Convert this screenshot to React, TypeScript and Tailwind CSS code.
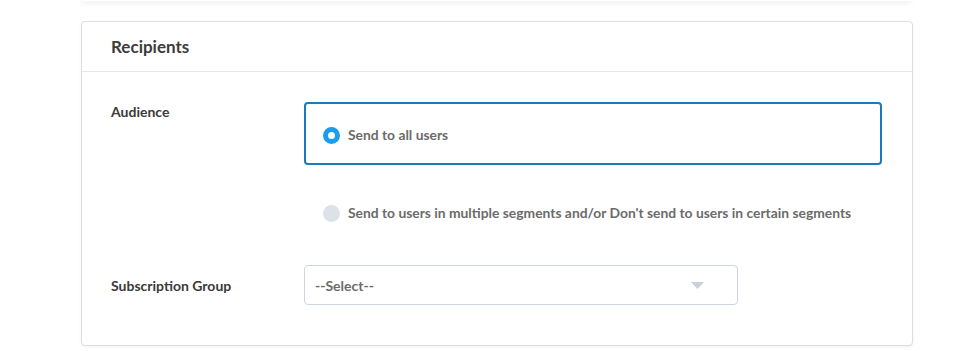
import React from "react";

const font = { fontFamily: "Lato, 'Open Sans', Arial, sans-serif" };

function Radio({ checked }: { checked: boolean }) {
  return checked ? (
    <span className="h-[17px] w-[17px] shrink-0 rounded-full border-[5px] border-[#1a9cf0] bg-white" />
  ) : (
    <span className="h-[17px] w-[17px] shrink-0 rounded-full bg-[#dde1e8]" />
  );
}

export default function App() {
  return (
    <div className="min-h-[351px] w-[975px] bg-white" style={font}>
      {/* previous card edge */}
      <div className="ml-[82px] h-[1px] w-[829px] bg-white shadow-[0_1px_5px_rgba(0,0,0,0.25)]" />

      <div className="ml-[81px] mt-[20px] w-[832px] rounded-[4px] border border-[#dedede] bg-white shadow-[0_1px_3px_rgba(0,0,0,0.06)]">
        <div className="flex h-[50px] items-center border-b border-[#e6e6e6] pl-[29px]">
          <h2 className="text-[17px] font-bold text-[#3c3c3c]">Recipients</h2>
        </div>

        <div className="pl-[29px] pt-[30px] pb-[40px]">
          {/* Audience */}
          <div className="flex">
            <div className="w-[193px] -mt-[1px] text-[14px] font-bold text-[#3a3a3a]">Audience</div>
            <div className="flex w-[578px] flex-col">
              <label className="flex h-[63px] items-center gap-[8px] rounded-[4px] border-2 border-[#1b7bb9] pl-[17px] pt-[3px]">
                <Radio checked />
                <span className="text-[13.85px] font-bold text-[#6b6b6b]">Send to all users</span>
              </label>
              <label className="mt-[31px] flex h-[34px] items-center gap-[8px] pl-[19px]">
                <Radio checked={false} />
                <span className="text-[13.85px] font-bold text-[#6b6b6b]">
                  Send to users in multiple segments and/or Don't send to users in certain segments
                </span>
              </label>
            </div>
          </div>

          {/* Subscription group */}
          <div className="mt-[35px] flex items-center">
            <div className="w-[193px] text-[14px] font-bold text-[#3a3a3a]">Subscription Group</div>
            <div className="relative flex h-[40px] w-[434px] items-center rounded-[4px] border border-[#cdd6e0] pl-[10px] pt-[1px]">
              <span className="text-[14px] font-bold text-[#6b6b6b]">--Select--</span>
              <svg className="absolute left-[386px] top-[16px]" width="13" height="7" viewBox="0 0 13 7">
                <path d="M0 0 L13 0 L6.5 7 Z" fill="#c8d1dc" />
              </svg>
            </div>
          </div>
        </div>
      </div>
    </div>
  );
}
